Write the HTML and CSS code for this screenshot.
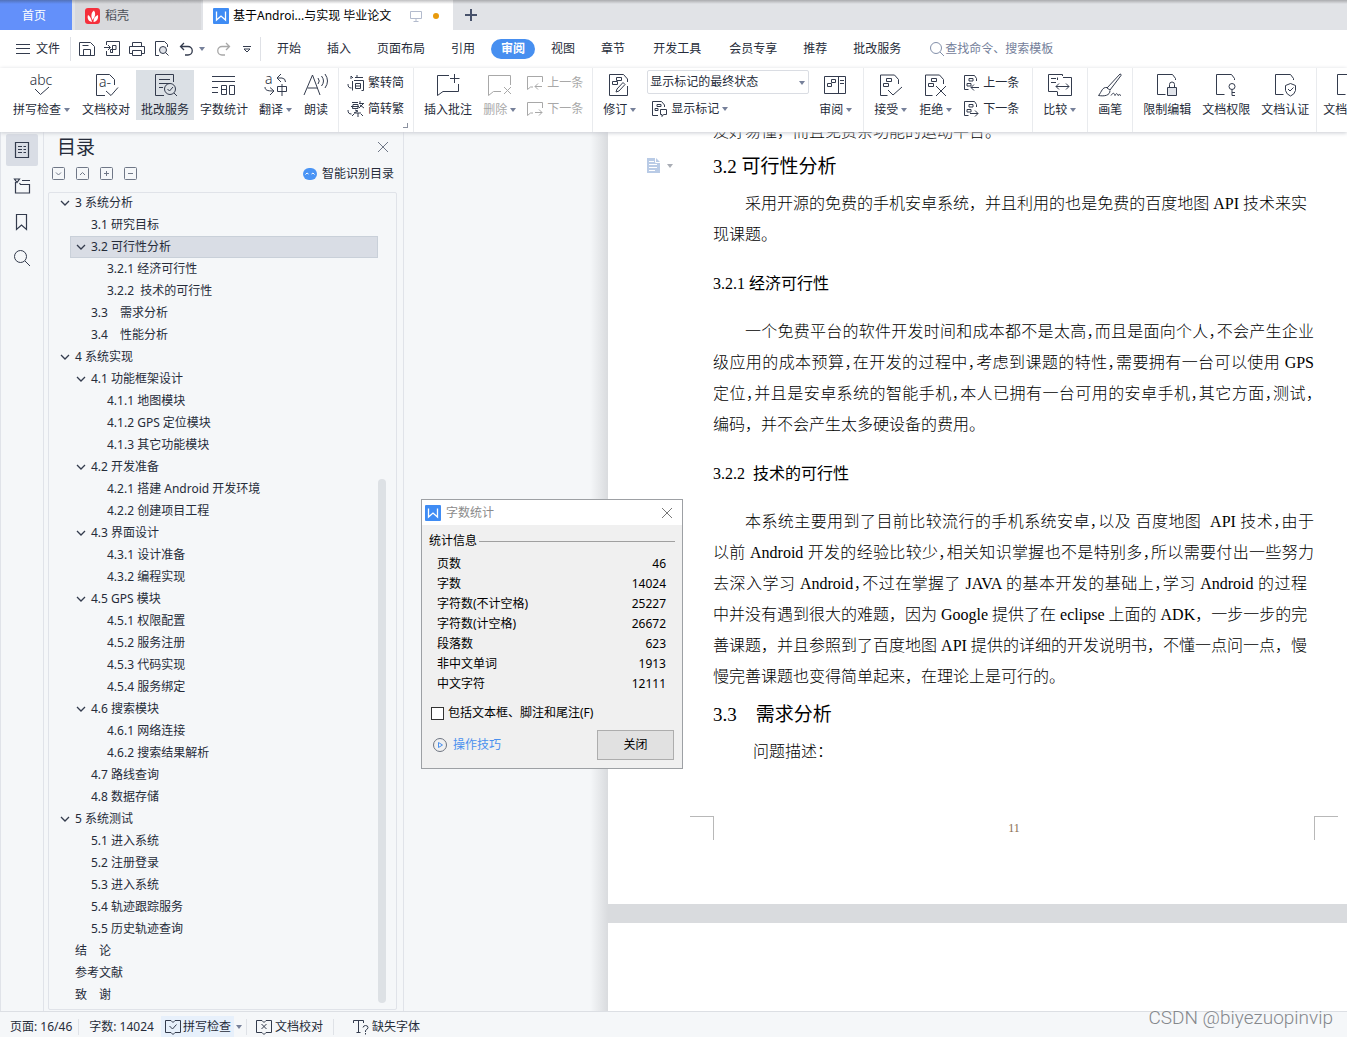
FILE: index.html
```html
<!DOCTYPE html>
<html lang="zh-CN">
<head>
<meta charset="utf-8">
<title>基于Android与实现 毕业论文</title>
<link rel="stylesheet" href="styles.css">
</head>
<body>
<svg class="defs" aria-hidden="true">
  <symbol id="logo" viewBox="0 0 16 16"><rect width="16" height="16" rx="1" fill="#3f8cf4"/><path d="M3.5 3.500v8.500l4.500-4 4.500 4V3.500" fill="none" stroke="#fff" stroke-width="1.300"/></symbol>
  <symbol id="caret" viewBox="0 0 10 10"><path d="M1 3l4 4 4-4" stroke-width="1.300"/></symbol>
  <symbol id="cross" viewBox="0 0 12 12"><path d="M1 1l10 10m0-10L1 11"/></symbol>
  <symbol id="markdoc" viewBox="0 0 24 24"><path d="M19.500 11V6.500l-4-4.500H1.500v20.500h7M7.500 5.500h5v3h-5zM4.500 10.500h5v3h-5z"/></symbol>
  <symbol id="sdoc" viewBox="0 0 16 16"><path d="M13.500 6V3.500l-2-3H1.500v14h4M6 3.500h4v2.500H6zM4 8.500h4V11H4z"/></symbol>
  <symbol id="bubble" viewBox="0 0 16 16"><path d="M15.500 7V1.500H.5v13l3-2.500h2.500"/></symbol>
  <symbol id="plaindoc" viewBox="0 0 24 24"><path d="M20.500 7V5.500l-3-4H2.500v20h8"/></symbol>
</svg>

<header class="tabbar">
  <button class="tab home">首页</button>
  <button class="tab docer"><svg width="16" height="16" viewBox="0 0 16 16"><rect width="15" height="16" rx="3" fill="#f5303c"/><path d="M7 14C3 13 2 10 3 7c2 1 3 3 4 7zM7.500 12C5.500 8 6.500 4 9 2.500c2 3 1.500 6-1.500 9.500zM8.500 14c0-4 1.500-6 4.500-7 .5 4-1 6.500-4.500 7z" fill="#fff"/></svg>稻壳</button>
  <div class="tab active"><svg width="16" height="16"><use href="#logo"/></svg><span>基于Androi...与实现 毕业论文</span>
    <svg class="line screen" width="12" height="12" viewBox="0 0 12 12"><path d="M.5 1.500h11v7H.5zM6 8.500v3M3.500 11.500h5"/></svg><i class="dot"></i></div>
  <button class="plus" aria-label="新建"><svg width="12" height="12" viewBox="0 0 12 12"><path d="M6 0v12M0 6h12" stroke="#47526b" stroke-width="2"/></svg></button>
</header>

<nav class="menubar">
  <button class="file"><svg class="line" width="14" height="12" viewBox="0 0 14 12"><path d="M0 1.500h14M0 5.500h14M0 10.500h14"/></svg>文件</button>
  <div class="quick">
    <button aria-label="保存"><svg class="line" width="16" height="16" viewBox="0 0 16 16"><path d="M.5 14.500V1.500h11l4 4v9zM4.500 14V8.500h7V14M3.500 4.500h6"/></svg></button>
    <button aria-label="输出为PDF"><svg class="line" width="16" height="16" viewBox="0 0 16 16"><path d="M2.500 4V.5h13v14h-13V10M0 6.500h6M4 4l2.500 2.500L4 9M8.500 12V4.500h3.500v4H6.500v3h2"/></svg></button>
    <button aria-label="打印"><svg class="line" width="16" height="16" viewBox="0 0 16 16"><path d="M3.500 5V1.500h9V5M3.500 12.500h-3v-7h15v7h-3M3.500 9.500h9v5h-9z"/></svg></button>
    <button aria-label="打印预览"><svg class="line" width="16" height="16" viewBox="0 0 16 16"><path d="M5 14.500H1.500V.5h9l3 3V6"/><circle cx="9" cy="9" r="3.500" fill="#dfe2e8"/><path d="M11.500 11.500l3 3"/></svg></button>
    <button aria-label="撤销"><svg class="line" width="16" height="16" viewBox="0 0 16 16"><path d="M5 2L1.500 5.500 5 9M1.500 5.500H9a4 4 0 0 1 0 8.500H6" stroke-width="1.300"/></svg></button>
    <i class="arrow"></i>
    <button class="off" aria-label="恢复"><svg class="line" width="16" height="16" viewBox="0 0 16 16"><path d="M11 2l3.500 3.500L11 9M14.500 5.500H7A4 4 0 0 0 7 14h3" stroke-width="1.300"/></svg></button>
    <button aria-label="自定义快速访问"><svg class="line" width="10" height="10" viewBox="0 0 10 10"><path d="M1 2.500h8M2 5l3 3 3-3z"/></svg></button>
  </div>
  <div class="menus">
    <button>开始</button><button>插入</button><button>页面布局</button><button>引用</button><button class="on">审阅</button><button>视图</button><button>章节</button><button class="dev">开发工具</button><button>会员专享</button><button>推荐</button><button>批改服务</button>
  </div>
  <label class="search"><svg class="line" width="16" height="16" viewBox="0 0 16 16"><circle cx="7" cy="7" r="5.500"/><path d="M11 11l4 4"/></svg><input type="text" placeholder="查找命令、搜索模板" aria-label="查找命令"></label>
</nav>

<div class="ribbon">
  <div class="group first">
    <button class="big"><svg width="24" height="24" viewBox="0 0 24 24"><text x="11" y="12" class="glyph" text-anchor="middle">abc</text><path d="M5 16l5.500 5.500L19 14"/></svg><span class="drop">拼写检查</span></button>
    <button class="big"><svg width="24" height="24" viewBox="0 0 24 24"><path d="M20.500 12V6.500l-5-5H2.500v21H11M12 18l5 4.500 7-8"/><text x="5" y="14" class="glyph">a-</text></svg><span>文档校对</span></button>
    <button class="big on"><svg width="24" height="24" viewBox="0 0 24 24"><path d="M20.500 9V1.500h-18v21H11M6 6.500h11M6 10.500h11M6 14.500h4"/><circle cx="17" cy="16" r="5.500"/><path d="M14.500 16l2 2 3.500-4M21 20l3 3"/></svg><span>批改服务</span></button>
    <button class="big"><svg width="24" height="24" viewBox="0 0 24 24"><path d="M0 3.500h23M0 8.500h23M0 14.500h6M0 19.500h6M9.500 12.500h5v9h-5zM9.500 16.500h5M17.500 12.500h5v9h-5z"/></svg><span>字数统计</span></button>
    <button class="big"><svg width="24" height="24" viewBox="0 0 24 24"><text x="1" y="11" class="glyph">a</text><path d="M17 1l-4 4 4 4M13 5h5a4 4 0 0 1 3.500 4M1 14c0 3 2 4 8 4M6 14.500l4 3.500-4 4M13.500 13.500h9v5h-9zM18 11v12"/></svg><span class="drop">翻译</span></button>
    <button class="big"><svg width="24" height="24" viewBox="0 0 24 24"><path d="M0 22L8.500 2 16 22M3.500 15h10M14 5q2.500 3 0 6M17.500 3q4 5 0 10M21 1q5 7 0 14"/></svg><span>朗读</span></button>
  </div>
  <div class="group corner">
    <div class="stack">
      <button class="small"><svg width="16" height="16" viewBox="0 0 16 16"><path d="M3 4V1l2 2M7 2.500h8M9 0v2M4.500 6v9.500M6 5.500h9.500v10h-2M7.500 8.500h5v5h-5zM7.500 11h5M0 9c0 3 1 4 3.500 4"/></svg>繁转简</button>
      <button class="small"><svg width="16" height="16" viewBox="0 0 16 16"><path d="M4 1.500h6M5 3.500h5v4H4.500zM3 5.500h8M12 0v3M11 2.500h5M11 7l4-4M12 4l4 3M7 9l3 1-4 2h7M10 12v4M6 13l-2 2M13 13l2 2M0 9c0 3 1 4 3.500 4"/></svg>简转繁</button>
    </div>
  </div>
  <div class="group">
    <button class="big"><svg width="24" height="24" viewBox="0 0 24 24"><path d="M13 2.500H1.500v20L7 18.500h15.500V11M18.500 1v9M14 5.500h9.500"/></svg><span>插入批注</span></button>
    <button class="big off" disabled><svg width="24" height="24" viewBox="0 0 24 24"><path d="M22.500 12V2.500H.5v20l5-4H13M16 14l7 7m0-7l-7 7"/></svg><span class="drop">删除</span></button>
    <div class="stack">
      <button class="small off" disabled><svg width="16" height="16" viewBox="0 0 16 16"><use href="#bubble"/><path d="M15 11.500H8M11 8.500l-3 3 3 3"/></svg>上一条</button>
      <button class="small off" disabled><svg width="16" height="16" viewBox="0 0 16 16"><use href="#bubble"/><path d="M8 11.500h7M12 8.500l3 3-3 3"/></svg>下一条</button>
    </div>
  </div>
  <div class="group">
    <button class="big"><svg width="24" height="24" viewBox="0 0 24 24"><path d="M19.500 9V6l-4-4.500H1.500v21h18V13M8.500 4.500h5v3h-5zM4.500 8.500h5v3h-5zM8 19l1-3 6-6.500 2 2L11 18z"/></svg><span class="drop">修订</span></button>
    <div class="stack view">
      <div class="combo"><select aria-label="显示状态"><option>显示标记的最终状态</option></select><i class="arrow"></i></div>
      <button class="small"><svg width="16" height="16" viewBox="0 0 16 16"><path d="M13.500 6V4l-3-3.500h-9v14H7M6 3.500h4v2H6zM4 7.500h3v2H4zM9.500 8.500h6v5h-3l-1.500 2v-2H9.500z"/></svg><span class="drop">显示标记</span></button>
    </div>
    <button class="big"><svg width="24" height="24" viewBox="0 0 24 24"><path d="M.5 3.500h21v17H.5zM14.500 3.500v17M7.500 6.500h4v3h-4zM3.500 10.500h4v3h-4zM16 7.500h4M16 10.500h4"/></svg><span class="drop">审阅</span></button>
  </div>
  <div class="group wide">
    <button class="big"><svg width="24" height="24" viewBox="0 0 24 24"><use href="#markdoc"/><path d="M9 17l5 5 9-8"/></svg><span class="drop">接受</span></button>
    <button class="big"><svg width="24" height="24" viewBox="0 0 24 24"><use href="#markdoc"/><path d="M12 13l10 10m0-10L12 23"/></svg><span class="drop">拒绝</span></button>
    <div class="stack">
      <button class="small"><svg width="16" height="16" viewBox="0 0 16 16"><use href="#sdoc"/><path d="M16 12.500H8M11 9.500l-3 3 3 3"/></svg>上一条</button>
      <button class="small"><svg width="16" height="16" viewBox="0 0 16 16"><use href="#sdoc"/><path d="M7 12.500h8M12 9.500l3 3-3 3"/></svg>下一条</button>
    </div>
  </div>
  <div class="group">
    <button class="big"><svg width="24" height="24" viewBox="0 0 24 24"><path d="M14.500 3V1.500H.5v17h9M15 4.500h8.500v18h-14V19M9.500 7V4.500M3 5.500h5M3 9.500h5M8 13.500h13M11 10.500l-3 3 3 3M18 10.500l3 3-3 3"/></svg><span class="drop">比较</span></button>
  </div>
  <div class="group">
    <button class="big"><svg width="24" height="24" viewBox="0 0 24 24"><path d="M9 15L22 1q1.500 0 1 1.500L12 17zM9 14.500c-5-.5-5 4-8.500 8 6 1 11.500 0 11.500-5M13 22.500c2-3 3-3 4 0 1-2 2-3 3 0q1-2 3 0"/></svg><span>画笔</span></button>
  </div>
  <div class="group tight">
    <button class="big"><svg width="24" height="24" viewBox="0 0 24 24"><use href="#plaindoc"/><path d="M12.500 14.500h9v8h-9z" fill="#e1e4ea"/><path d="M14.500 14v-2.500a2.500 2.500 0 0 1 5 0V14"/></svg><span>限制编辑</span></button>
    <button class="big"><svg width="24" height="24" viewBox="0 0 24 24"><use href="#plaindoc"/><circle cx="18" cy="13.500" r="3"/><path d="M18 16.500v6M18 19.500h3M18 22.500h3"/></svg><span>文档权限</span></button>
    <button class="big"><svg width="24" height="24" viewBox="0 0 24 24"><use href="#plaindoc"/><path d="M17.500 10.500l5 2v5q-1 4-5 5.500-4-1.500-5-5.500v-5zM15 16l2 2 3.500-3.500"/></svg><span>文档认证</span></button>
  </div>
  <div class="group tight">
    <button class="big"><svg width="24" height="24" viewBox="0 0 24 24"><use href="#plaindoc"/></svg><span>文档定稿</span></button>
  </div>
</div>

<main class="work">
  <aside class="rail">
    <button class="on" aria-label="目录"><svg class="line" width="16" height="16" viewBox="0 0 16 16"><path d="M1.500.5h13v15h-13zM4 4.500h4M9.500 4.500h2.500M4 7.500h4M9.500 7.500h2.500M4 10.500h4M9.500 10.500h2.500" stroke-width="1.200"/></svg></button>
    <button aria-label="章节"><svg class="line" width="16" height="16" viewBox="0 0 16 16"><path d="M.5 1h5L3 4.500zM8 2.500h8M1.500 4v11h14V6.500h-9l-1-1.500" stroke-width="1.200"/></svg></button>
    <button aria-label="书签"><svg class="line" width="16" height="16" viewBox="0 0 16 16"><path d="M2.500.5h10v15L7.500 11l-5 4.500z" stroke-width="1.200"/></svg></button>
    <button aria-label="查找"><svg class="line" width="18" height="18" viewBox="0 0 18 18"><circle cx="7.500" cy="7.500" r="6"/><path d="M12 12l5 5"/></svg></button>
  </aside>
  <section class="panel">
    <div class="ptitle"><h2>目录</h2><button aria-label="关闭"><svg class="line" width="12" height="12"><use href="#cross"/></svg></button></div>
    <div class="ptools">
      <button aria-label="展开"><svg class="line" width="14" height="14" viewBox="0 0 14 14"><rect x=".5" y=".5" width="12" height="12" rx="1"/><path d="M4 5.500L6.500 8 9 5.500"/></svg></button>
      <button aria-label="收起"><svg class="line" width="14" height="14" viewBox="0 0 14 14"><rect x=".5" y=".5" width="12" height="12" rx="1"/><path d="M4 8l2.500-2.500L9 8"/></svg></button>
      <button aria-label="展开一级"><svg class="line" width="14" height="14" viewBox="0 0 14 14"><rect x=".5" y=".5" width="12" height="12" rx="1"/><path d="M4 6.500h5M6.500 4v5"/></svg></button>
      <button aria-label="收起一级"><svg class="line" width="14" height="14" viewBox="0 0 14 14"><rect x=".5" y=".5" width="12" height="12" rx="1"/><path d="M4 6.500h5"/></svg></button>
      <button class="smart"><svg width="14" height="12" viewBox="0 0 14 12"><rect width="14" height="12" rx="6" fill="#4a94f5"/><path d="M2.500 6.500L4 5l1.500 1M8.500 6L10 5l1.500 1.500" fill="none" stroke="#fff"/></svg>智能识别目录</button>
    </div>
    <div class="tree">
      <ul>
        <li class="l1"><svg><use href="#caret"/></svg>3 系统分析</li>
        <li class="l2"><i></i>3.1 研究目标</li>
        <li class="l2 sel"><svg><use href="#caret"/></svg>3.2 可行性分析</li>
        <li class="l3"><i></i>3.2.1 经济可行性</li>
        <li class="l3"><i></i>3.2.2&nbsp; 技术的可行性</li>
        <li class="l2"><i></i>3.3　需求分析</li>
        <li class="l2"><i></i>3.4　性能分析</li>
        <li class="l1"><svg><use href="#caret"/></svg>4 系统实现</li>
        <li class="l2"><svg><use href="#caret"/></svg>4.1 功能框架设计</li>
        <li class="l3"><i></i>4.1.1 地图模块</li>
        <li class="l3"><i></i>4.1.2 GPS 定位模块</li>
        <li class="l3"><i></i>4.1.3 其它功能模块</li>
        <li class="l2"><svg><use href="#caret"/></svg>4.2 开发准备</li>
        <li class="l3"><i></i>4.2.1 搭建 Android 开发环境</li>
        <li class="l3"><i></i>4.2.2 创建项目工程</li>
        <li class="l2"><svg><use href="#caret"/></svg>4.3 界面设计</li>
        <li class="l3"><i></i>4.3.1 设计准备</li>
        <li class="l3"><i></i>4.3.2 编程实现</li>
        <li class="l2"><svg><use href="#caret"/></svg>4.5 GPS 模块</li>
        <li class="l3"><i></i>4.5.1 权限配置</li>
        <li class="l3"><i></i>4.5.2 服务注册</li>
        <li class="l3"><i></i>4.5.3 代码实现</li>
        <li class="l3"><i></i>4.5.4 服务绑定</li>
        <li class="l2"><svg><use href="#caret"/></svg>4.6 搜索模块</li>
        <li class="l3"><i></i>4.6.1 网络连接</li>
        <li class="l3"><i></i>4.6.2 搜索结果解析</li>
        <li class="l2"><i></i>4.7 路线查询</li>
        <li class="l2"><i></i>4.8 数据存储</li>
        <li class="l1"><svg><use href="#caret"/></svg>5 系统测试</li>
        <li class="l2"><i></i>5.1 进入系统</li>
        <li class="l2"><i></i>5.2 注册登录</li>
        <li class="l2"><i></i>5.3 进入系统</li>
        <li class="l2"><i></i>5.4 轨迹跟踪服务</li>
        <li class="l2"><i></i>5.5 历史轨迹查询</li>
        <li class="l1"><i></i>结　论</li>
        <li class="l1"><i></i>参考文献</li>
        <li class="l1"><i></i>致　谢</li>
      </ul>
      <div class="thumb"></div>
    </div>
  </section>
  <div class="canvas">
    <article class="sheet one">
      <div class="hint"><svg width="13" height="15" viewBox="0 0 13 15"><path d="M0 0h9l4 4v11H0z" fill="#b9cbe6"/><path d="M2 3.500h5M2 6.500h8M2 9.500h8M2 12.500h6M8.500 0v4.500H13" stroke="#fff" fill="none"/></svg><i class="arrow"></i></div>
      <p class="end"><span>友好易懂，而且免费亲功能的运动平台。</span></p>
      <h2>3.2 可行性分析</h2>
      <p class="indent"><span class="near">采用开源的免费的手机安卓系统，并且利用的也是免费的百度地图 API 技术来实</span><span>现课题。</span></p>
      <h3>3.2.1 经济可行性</h3>
      <p class="indent"><span class="tight">一个免费平台的软件开发时间和成本都不是太高，而且是面向个人，不会产生企业</span><span class="tight">级应用的成本预算，在开发的过程中，考虑到课题的特性，需要拥有一台可以使用 GPS</span><span class="tight">定位，并且是安卓系统的智能手机，本人已拥有一台可用的安卓手机，其它方面，测试，</span><span>编码，并不会产生太多硬设备的费用。</span></p>
      <h3>3.2.2&nbsp; 技术的可行性</h3>
      <p class="indent"><span class="tight">本系统主要用到了目前比较流行的手机系统安卓，以及 百度地图&nbsp; API 技术，由于</span><span class="tight">以前 Android 开发的经验比较少，相关知识掌握也不是特别多，所以需要付出一些努力</span><span class="near tight">去深入学习 Android，不过在掌握了 JAVA 的基本开发的基础上，学习 Android 的过程</span><span class="near">中并没有遇到很大的难题，因为 Google 提供了在 eclipse 上面的 ADK，一步一步的完</span><span class="near">善课题，并且参照到了百度地图 API 提供的详细的开发说明书，不懂一点问一点，慢</span><span>慢完善课题也变得简单起来，在理论上是可行的。</span></p>
      <h2>3.3　需求分析</h2>
      <p class="deep"><span>问题描述：</span></p>
      <footer><i class="mark left"></i><span>11</span><i class="mark right"></i></footer>
    </article>
    <article class="sheet two"></article>
  </div>
</main>

<footer class="status">
  <span class="cell">页面: 16/46</span>
  <span class="cell">字数: 14024</span>
  <button class="spell"><svg class="line" width="16" height="16" viewBox="0 0 16 16"><path d="M6 1.500H.5v12H6l2 2 2-2h5.500v-12H10l-2 2zM4.500 7l3 3 4-4.500"/></svg>拼写检查</button><i class="arrow"></i>
  <button class="proof"><svg class="line" width="16" height="16" viewBox="0 0 16 16"><path d="M6 1.500H.5v12H6l2 2 2-2h5.500v-12H10l-2 2zM5.500 5l5 5m0-5l-5 5"/></svg>文档校对</button>
  <button class="fonts"><svg class="line" width="16" height="16" viewBox="0 0 16 16"><path d="M.5 4V1.500h10V4M5.500 1.500v12M3.500 13.500h4M10 8.500q.5-2 2.500-2 2.500 0 2.500 2 0 1.500-2.500 3V13M12.500 14v1.500"/></svg>缺失字体</button>
</footer>

<section class="dialog" role="dialog" aria-label="字数统计">
  <header><svg width="16" height="16"><use href="#logo"/></svg><span>字数统计</span><button aria-label="关闭"><svg class="line" width="12" height="12"><use href="#cross"/></svg></button></header>
  <div class="legend">统计信息</div>
  <table>
    <tr><th>页数</th><td>46</td></tr>
    <tr><th>字数</th><td>14024</td></tr>
    <tr><th>字符数(不计空格)</th><td>25227</td></tr>
    <tr><th>字符数(计空格)</th><td>26672</td></tr>
    <tr><th>段落数</th><td>623</td></tr>
    <tr><th>非中文单词</th><td>1913</td></tr>
    <tr><th>中文字符</th><td>12111</td></tr>
  </table>
  <label class="check"><input type="checkbox">包括文本框、脚注和尾注(F)</label>
  <div class="actions"><a href="#tips"><svg width="14" height="14" viewBox="0 0 14 14"><circle cx="7" cy="7" r="6.500" fill="none" stroke="#6d7481"/><path d="M5.500 4.500v5l4-2.500z" fill="none" stroke="#4a90ee"/></svg>操作技巧</a><button>关闭</button></div>
</section>
<div class="watermark">CSDN @biyezuopinvip</div>
</body>
</html>
```
FILE: styles.css
```css
* { box-sizing: border-box; }
body {
  margin: 0;
  height: 100vh;
  display: flex;
  flex-direction: column;
  overflow: hidden;
  position: relative;
  background: #f5f7f9;
  color: #262c3a;
  font: 12px/16px "Noto Sans", "Noto Sans CJK SC", sans-serif;
}
button {
  font: inherit;
  color: inherit;
  background: none;
  border: 0;
  padding: 0;
  white-space: nowrap;
  display: flex;
  align-items: center;
  flex: none;
}
svg { flex: none; display: block; overflow: visible; }
h2, h3, p, ul { margin: 0; padding: 0; font-weight: 400; }
.defs { position: absolute; width: 0; height: 0; overflow: hidden; }
.line, .ribbon svg, .tree svg { fill: none; stroke: #333b4d; }
.arrow {
  flex: none;
  border: 3px solid transparent;
  border-top: 4px solid #76809a;
  border-bottom: 0;
}

/* window tabs */
.tabbar {
  height: 30px;
  flex: none;
  display: flex;
  background: linear-gradient(#aaabae, #e1e3e7 4px);
}
.tab { display: flex; align-items: center; gap: 4px; padding-top: 2px; }
.home { width: 72px; padding-right: 4px; justify-content: center; color: #fff; background: linear-gradient(#5272b8, #6390fa 4px); }
.docer { width: 126px; margin: 0 2px 0 3px; padding-left: 10px; color: #4b4f57; background: linear-gradient(#a5a6a9, #d8d9dc 4px); }
.active { width: 250px; padding-left: 10px; color: #000; background: linear-gradient(#c0c0c2, #fff 4px); }
.screen { margin-left: 15px; }
.tab .screen { stroke: #b3bbcd; }
.dot { width: 6px; height: 6px; margin-left: 7px; border-radius: 50%; background: #e89a0c; }
.plus { padding: 0 12px; }

/* menu row */
.menubar { height: 38px; flex: none; display: flex; align-items: center; background: #fff; }
.file { gap: 6px; padding: 0 10px 0 16px; height: 24px; border-right: 1px solid #dfe1e6; }
.quick { display: flex; align-items: center; gap: 9px; height: 24px; padding: 0 8px; border-right: 1px solid #dfe1e6; }
.quick .arrow { margin: 0 1px 0 -5px; }
.quick button:last-child { margin-left: 2px; }
.off, .ribbon .off svg, .quick .off svg { color: #a8a8a8; stroke: #a8a8a8; }
.menus { display: flex; gap: 6px; padding-left: 6px; }
.menus button { height: 20px; padding: 0 10px; }
.menus .dev { margin: 0 2px; }
.menus .on { background: #478ff0; color: #fff; border-radius: 10px; font-weight: 700; }
.search { display: flex; align-items: center; margin-left: 18px; }
.search .line { stroke: #8390aa; }
.search input { width: 140px; padding: 0; border: 0; outline: 0; background: none; font: inherit; }
.search input::placeholder { color: #74809a; opacity: 1; }

/* ribbon */
.ribbon {
  height: 64px;
  flex: none;
  display: flex;
  overflow: hidden;
  background: #fff;
  position: relative;
  z-index: 1;
  box-shadow: 0 1px 4px #c9ccd2;
}
.group { display: flex; align-items: flex-start; gap: 1px; padding: 2px 5px 0; border-right: 1px solid #e9ebee; flex: none; }
.group.first { padding-left: 8px; }
.group.wide { padding-right: 9px; }
.group.tight { padding-right: 2px; }
.group.tight + .group.tight { padding-left: 1px; }
.corner { background: linear-gradient(#8b91a0, #8b91a0) right 5px bottom 4px / 5px 1px no-repeat, linear-gradient(#8b91a0, #8b91a0) right 5px bottom 4px / 1px 5px no-repeat; }
.big { flex-direction: column; gap: 5px; height: 50px; padding: 3px 5px 2px; }
.big.on { background: #dbe0e5; }
.glyph { font-size: 14px; font-weight: 300; fill: #262c3a; stroke: none; }
.drop { display: flex; align-items: center; }
.drop::after { content: ""; margin: 0 1px 0 3px; border: 3px solid transparent; border-top: 4px solid #76809a; border-bottom: 0; }
.stack { display: flex; flex-direction: column; gap: 4px; padding-top: 2px; }
.small { gap: 4px; height: 22px; padding: 0 4px; }
.view { margin: 0 4px; padding: 0; }
.combo { position: relative; display: flex; }
.combo select { appearance: none; width: 162px; height: 24px; padding: 0 2px; border: 1px solid #dadde3; border-radius: 2px; background: #fff; font: inherit; color: inherit; }
.combo .arrow { position: absolute; right: 4px; top: 11px; }

/* working area */
.work { flex: 1; min-height: 0; display: flex; }
.rail { width: 44px; display: flex; flex-direction: column; gap: 4px; align-items: center; padding-top: 2px; border: 1px solid #e0e3e9; border-width: 0 1px; flex: none; }
.rail button { width: 32px; height: 32px; justify-content: center; border-radius: 2px; }
.rail .on { background: #d9dde5; }
.panel { width: 360px; flex: none; display: flex; flex-direction: column; padding: 0 6px 1px 4px; border-right: 1px solid #e0e3e9; }
.ptitle { display: flex; justify-content: space-between; align-items: center; height: 30px; padding: 0 8px 0 9px; }
.ptitle h2 { font-size: 19px; line-height: 28px; }
.ptitle .line, .ptools .line { stroke: #6f7787; }
.ptools { display: flex; align-items: center; gap: 10px; height: 24px; padding: 0 3px 0 4px; }
.smart { gap: 5px; margin-left: auto; }
.tree { flex: 1; min-height: 0; margin-top: 6px; display: flex; overflow: hidden; border: 1px solid #e0e3e9; border-radius: 2px; }
.tree ul { flex: 1; list-style: none; margin-top: -1px; }
.tree li { display: flex; align-items: center; gap: 5px; height: 22px; padding-left: 5px; border: 1px solid transparent; white-space: pre; }
.tree li svg, .tree li i { width: 10px; height: 10px; flex: none; }
.l1 { margin-left: 5px; }
.l2 { margin-left: 21px; }
.l3 { margin-left: 37px; }
.tree .sel { background: #d9dde5; border-color: #c9d0d9; }
.thumb { width: 8px; margin: 286px 10px 6px 0; border-radius: 4px; background: #dde1e5; }

/* pages */
.canvas { flex: 1; min-width: 0; display: flex; flex-direction: column; overflow: hidden; padding-left: 204px; background: linear-gradient(90deg, transparent 186px, #d9dbde 204px); }
.sheet { flex: none; position: relative; background: #fff; color: #000; font: 16px/31px "Liberation Serif", "Noto Sans CJK SC", serif; }
.sheet.one { height: 788px; margin: -16px 0 19px; display: flex; flex-direction: column; padding: 0 33px 0 105px; }
.sheet.two { flex: 1; }
.sheet h2 { font-size: 19px; line-height: 40px; }
.sheet h3 { font-size: 16px; line-height: 31px; margin: 18px 0 17px; }
.sheet h2 + p { margin-top: 1px; }
.sheet p + h2 { margin-top: 3px; }
.sheet p.end + h2 { margin-top: 0; }
.sheet p { font-weight: 300; }
.sheet p span { display: block; white-space: nowrap; text-align-last: justify; }
.sheet p span:last-child { text-align-last: left; }
.sheet .near { margin-right: 7px; }
.sheet p .tight { font-feature-settings: "halt"; }
.indent span:first-child { padding-left: 32px; }
.deep { padding-left: 40px; }
.sheet footer { margin: auto -24px 64px -23px; display: flex; justify-content: space-between; align-items: center; color: #8a6f52; font-size: 12px; line-height: 24px; }
.mark { width: 24px; height: 24px; border-top: 1px solid #b8b8b8; }
.mark.left { border-right: 1px solid #b8b8b8; }
.mark.right { border-left: 1px solid #b8b8b8; }
.hint { position: absolute; left: 39px; top: 42px; display: flex; align-items: center; gap: 7px; }
.hint .arrow { border-top-color: #a9adb5; }

/* status bar */
.status { height: 26px; flex: none; display: flex; align-items: center; padding: 4px 0 0 10px; border-top: 1px solid #dcdfe4; background: #f5f7f9; position: relative; }
.cell:first-child { padding-right: 6px; margin-right: 10px; border-right: 1px solid #dfe2e7; }
.spell { gap: 2px; height: 22px; margin: 0 2px 0 7px; padding: 0 3px 0 4px; background: #e7f0fb; }
.proof { gap: 3px; margin-left: 4px; padding: 0 10px 0 9px; border: 1px solid #dfe2e7; border-width: 0 1px; }
.fonts { gap: 3px; margin-left: 19px; }

/* word count window */
.dialog { position: absolute; left: 421px; top: 499px; z-index: 2; width: 262px; height: 270px; border: 1px solid #9da0a4; background: #f0f0f0; color: #000; }
.dialog header { height: 25px; display: flex; align-items: center; gap: 5px; padding: 0 9px 0 3px; background: #fff; color: #8b8b8b; }
.dialog header button { margin-left: auto; }
.dialog header .line { stroke: #777; }
.legend { display: flex; align-items: center; gap: 2px; padding: 8px 7px 5px; }
.legend::after { content: ""; flex: 1; height: 1px; background: #a0a0a0; }
.dialog table { width: 229px; margin-left: 15px; border-collapse: collapse; }
.dialog th, .dialog td { height: 20px; padding: 0; font-weight: 400; text-align: left; }
.dialog td { text-align: right; }
.check { display: flex; align-items: center; gap: 4px; height: 20px; padding-left: 9px; margin-top: 9px; }
.check input { appearance: none; width: 13px; height: 13px; margin: 0; border: 1px solid #333; background: #fff; }
.actions { display: flex; justify-content: space-between; align-items: center; padding: 7px 8px 0 11px; }
.actions a { display: flex; align-items: center; gap: 6px; color: #4a90ee; text-decoration: none; }
.actions button { width: 77px; height: 30px; justify-content: center; border: 1px solid #adadad; background: #e1e1e1; }

.watermark { position: absolute; right: 14px; bottom: 7px; z-index: 3; color: #85888c; font: 300 19px/24px Roboto, sans-serif; }
```
